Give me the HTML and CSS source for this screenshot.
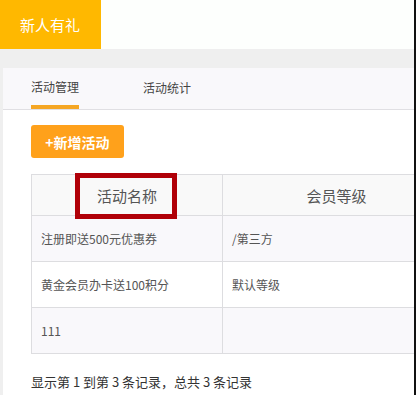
FILE: index.html
```html
<!DOCTYPE html>
<html lang="zh-CN">
<head>
    <meta charset="UTF-8">
    <meta name="viewport" content="width=device-width, initial-scale=1.0">
    <title>新人有礼</title>
    <link rel="stylesheet" href="styles.css">
</head>
<body>
<div class="page">
    <div class="topbar">
        <div class="brand">新人有礼</div>
    </div>

    <div class="panel">
        <div class="tabs">
            <div class="tab active">活动管理</div>
            <div class="tab">活动统计</div>
        </div>

        <div class="content">
            <button class="btn-add">+新增活动</button>

            <table class="list">
                <thead>
                    <tr>
                        <th class="col-name">活动名称<span class="mark"></span></th>
                        <th class="col-level">会员等级</th>
                    </tr>
                </thead>
                <tbody>
                    <tr>
                        <td>注册即送500元优惠券</td>
                        <td>/第三方</td>
                    </tr>
                    <tr>
                        <td>黄金会员办卡送100积分</td>
                        <td>默认等级</td>
                    </tr>
                    <tr>
                        <td>111</td>
                        <td></td>
                    </tr>
                </tbody>
            </table>

            <p class="pager">显示第 1 到第 3 条记录，总共 3 条记录</p>
        </div>
    </div>
</div>
</body>
</html>
```

FILE: styles.css
```css
body {
    margin: 0;
    background: #efefef;
    font-family: "Noto Sans CJK SC", "Liberation Sans", sans-serif;
    color: #555;
}
.page {
    width: 414px;
    height: 395px;
    border-right: 2px solid #111;
    overflow: hidden;
}
.topbar {
    height: 49px;
    background: #fdfffd;
    margin-bottom: 19px;
}
.brand {
    width: 81px;
    height: 49px;
    padding-left: 20px;
    background: #ffb800;
    color: #fff;
    font-size: 15px;
    line-height: 49px;
}
.panel {
    margin-left: 3px;
    background: #fff;
    height: 327px;
    overflow: hidden;
}
.tabs {
    display: flex;
    gap: 64px;
    height: 41px;
    padding-left: 28px;
    background: #f9f8fb;
    border-bottom: 1px solid #e0dfe3;
}
.tab {
    width: 48px;
    font-size: 12px;
    line-height: 40px;
    color: #444;
    white-space: nowrap;
    box-sizing: border-box;
}
.tab.active {
    border-bottom: 4px solid #f5a623;
    line-height: 37px;
}
.content {
    padding: 15px 0 0 28px;
}
.btn-add {
    display: block;
    width: 93px;
    height: 33px;
    border: none;
    border-radius: 3px;
    background: #ffa11b;
    color: #fff;
    font-family: inherit;
    font-size: 14px;
    font-weight: bold;
    padding: 0;
    cursor: pointer;
}
.list {
    margin-top: 16px;
    width: 420px;
    border-collapse: collapse;
    border: 1px solid #dddde0;
    font-size: 12px;
}
.list th {
    height: 40px;
    background: #f9f9f9;
    font-size: 15px;
    font-weight: normal;
    color: #555;
    border: 1px solid #dddde0;
    padding: 0;
}
.col-name {
    width: 190px;
    position: relative;
}
.mark {
    position: absolute;
    left: 43px;
    top: -2px;
    width: 102px;
    height: 46px;
    border: 5px solid #b00008;
    box-sizing: border-box;
}
.list td {
    height: 45px;
    padding: 0 9px;
    border: 1px solid #dddde0;
    color: #555;
}
.list tbody tr:nth-child(odd) td {
    background: #f9f8fb;
}
.pager {
    margin: 18px 0 0;
    font-size: 13px;
    color: #333;
}
```
